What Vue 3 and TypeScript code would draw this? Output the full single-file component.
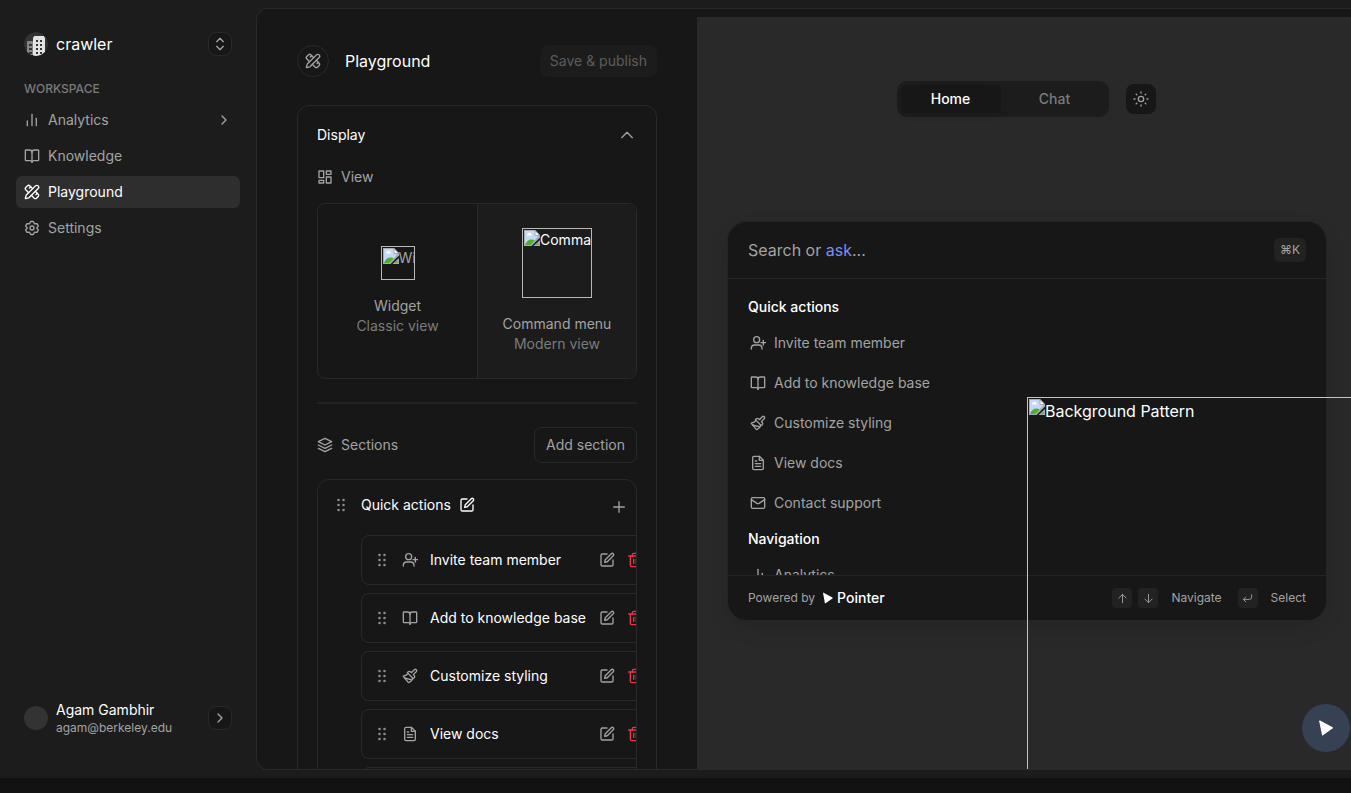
<script setup lang="ts">
import { h, ref } from 'vue'

const glyphs: Record<string, string[]> = {
  bars: ['M5 20.500v-7', 'M12 20.500V3.500', 'M18.500 20.500V9.500'],
  book: ['M12 6.5v15', 'M12 6.5C12 4.6 10.6 3 8.500 3H3a1 1 0 0 0-1 1v14a1 1 0 0 0 1 1h6.500c1.400 0 2.500 1 2.500 2.500 0-1.500 1.100-2.500 2.500-2.500H21a1 1 0 0 0 1-1V4a1 1 0 0 0-1-1h-5.500C13.400 3 12 4.600 12 6.500z'],
  design: [
    'M13 7 8.700 2.700a2.410 2.410 0 0 0-3.400 0L2.700 5.300a2.410 2.410 0 0 0 0 3.400L7 13',
    'm8 6 2-2', 'm18 16 2-2',
    'm17 11 4.300 4.300c.94.94.94 2.460 0 3.400l-2.600 2.600c-.94.94-2.460.94-3.400 0L11 17',
    'M21.200 6.800a2.800 2.800 0 0 0-4-4L3.800 16.200a2 2 0 0 0-.5.8L2 21.400a.5.5 0 0 0 .6.6L7 20.700a2 2 0 0 0 .8-.5z',
  ],
  gear: [
    'M10 2.200h4l1.650 3.480 3.840-.310 2 3.460L19.300 12l2.190 3.170-2 3.460-3.840-.310L14 21.800h-4l-1.650-3.480-3.840.310-2-3.460L4.700 12 2.510 8.830l2-3.460 3.840.310z',
    'M12 9a3 3 0 1 0 0 6 3 3 0 0 0 0-6z',
  ],
  right: ['m9 6 6 6-6 6'],
  up: ['m4 16 8-8 8 8'],
  sort: ['m7 8.500 5-5 5 5', 'm7 15.500 5 5 5-5'],
  grid: ['M3 3h7v10H3z', 'M14 3h7v5h-7z', 'M14 12h7v9h-7z', 'M3 17h7v4H3z'],
  layers: ['m12 2 10 5-10 5L2 7z', 'm2 12 10 5 10-5', 'm2 17 10 5 10-5'],
  edit: ['M12 3H5a2 2 0 0 0-2 2v14a2 2 0 0 0 2 2h14a2 2 0 0 0 2-2v-7', 'M18.400 2.600a2.100 2.100 0 0 1 3 3l-9 9L8.500 15.500l.9-3.900z'],
  plus: ['M12 4v16', 'M4 12h16'],
  userPlus: ['M10 2.500a4.500 4.500 0 1 0 0 9 4.500 4.500 0 0 0 0-9z', 'M2 21v-1a5 5 0 0 1 5-5h6a5 5 0 0 1 5 5v1', 'M20 8v7', 'M16.500 11.500h7'],
  brush: [
    'm14.600 17.900-10.700-2.900',
    'M18.400 2.600a2.120 2.120 0 1 1 3 3l-4 4a.5.5 0 0 0 0 .7l.9 1a2.400 2.400 0 0 1 0 3.400l-.9.900a.5.5 0 0 1-.7 0L8.400 7.300a.5.5 0 0 1 0-.7l.9-.900a2.400 2.400 0 0 1 3.400 0l1 .900a.5.5 0 0 0 .7 0z',
    'M9 8c-1.800 2.700-4 3.500-6.600 3.900a.5.5 0 0 0-.3.900l7.300 8.800a1 1 0 0 0 1.200.2C12.700 20.400 16 16.800 16 15',
  ],
  doc: ['M14 2H6a2 2 0 0 0-2 2v16a2 2 0 0 0 2 2h12a2 2 0 0 0 2-2V8z', 'M14 2v6h6', 'M8 9h2', 'M8 13h8', 'M8 17h8'],
  mail: ['M4 4h16a2 2 0 0 1 2 2v12a2 2 0 0 1-2 2H4a2 2 0 0 1-2-2V6c0-1.100.9-2 2-2z', 'm2 7 8.500 5.500a3 3 0 0 0 3 0L22 7'],
  trash: ['M2.500 6h19', 'M5 6v14a2 2 0 0 0 2 2h10a2 2 0 0 0 2-2V6', 'M8 6V4a2 2 0 0 1 2-2h4a2 2 0 0 1 2 2v2', 'M10 11v6', 'M14 11v6'],
  sun: ['M12 8a4 4 0 1 0 0 8 4 4 0 0 0 0-8z', 'M12 1.500v1.500', 'M12 21v1.500', 'm4.700 4.700 1 1', 'm18.300 18.300 1 1', 'M1.500 12H3', 'M21 12h1.500', 'm4.700 19.300 1-1', 'm18.300 5.700 1-1'],
  arrowUp: ['M12 21V3', 'm4 11 8-8 8 8'],
  arrowDown: ['M12 3v18', 'm4 13 8 8 8-8'],
  enter: ['M21 4v5a5 5 0 0 1-5 5H3', 'm8 9-5 5 5 5'],
}

const Icon = (props: { name: string }) =>
  h('svg', { class: 'icon', viewBox: '0 0 24 24', 'aria-hidden': 'true' }, glyphs[props.name].map((d) => h('path', { d })))
Icon.props = ['name']

const Grip = () =>
  h('svg', { class: 'grip', viewBox: '0 0 8 14', 'aria-hidden': 'true' },
    [2, 7, 12].flatMap((cy) => [1.5, 6.5].map((cx) => h('circle', { cx, cy, r: 1.3 }))))

const Missing = () =>
  h('svg', { class: 'missing', viewBox: '0 0 16 16', 'aria-hidden': 'true' }, [
    h('path', { d: 'M0 0h11l5 5v2.500L7.500 16H0z', fill: '#a9adb3' }),
    h('path', { d: 'M1 1h10v5h3.500L6.500 15H1z', fill: '#c5d8f8' }),
    h('path', { d: 'M3 5.500a1.200 1.200 0 0 1 .8-1.700 1.900 1.900 0 0 1 3.400.200A1.200 1.200 0 0 1 8 5.500z', fill: '#fff' }),
    h('path', { d: 'M1 15c1-3.500 3.500-5.500 6.500-5.500 1.300 0 2.300.4 3.200 1.100L6.500 15z', fill: '#4fae30' }),
    h('path', { d: 'M11 .500v5h4.700z', fill: '#fff', stroke: '#999', 'stroke-width': 0.8 }),
    h('path', { d: 'M16 10v6H9.500z', fill: '#a9adb3' }),
    h('path', { d: 'M14.500 12.500V15h-3z', fill: '#5faf43' }),
  ])

const nav = [
  { icon: 'bars', label: 'Analytics', more: true },
  { icon: 'book', label: 'Knowledge' },
  { icon: 'design', label: 'Playground', active: true },
  { icon: 'gear', label: 'Settings' },
]
const actions = [
  { icon: 'userPlus', label: 'Invite team member' },
  { icon: 'book', label: 'Add to knowledge base' },
  { icon: 'brush', label: 'Customize styling' },
  { icon: 'doc', label: 'View docs' },
  { icon: 'mail', label: 'Contact support' },
]
const view = ref('command')
const tab = ref('Home')
</script>

<template>
  <div class="app">
    <aside class="sidebar">
      <div class="account">
        <svg class="avatar" viewBox="0 0 24 24" aria-hidden="true">
          <defs><clipPath id="disc"><circle cx="12" cy="12" r="12" /></clipPath></defs>
          <g clip-path="url(#disc)">
            <path fill="#333" d="M0 0h24v24H0z" />
            <path fill="#858585" d="M3 10q0-1 1-1h5v14H3z" />
            <path fill="#e3e3e3" d="M9 6q0-1 1-1V4h10v1q1 0 1 1v18H9z" />
            <path fill="#333" d="M5 12h3v2H5zM5 16h3v2H5zM5 20h3v2H5zM12 8h2v2h-2zM16 8h2v2h-2zM12 12h2v2h-2zM16 12h2v2h-2zM12 16h2v2h-2zM16 16h2v2h-2zM12 20h2v2h-2zM16 20h2v2h-2z" />
          </g>
        </svg>
        <span class="org">crawler</span>
        <button class="mini" aria-label="Switch workspace"><Icon name="sort" /></button>
      </div>
      <div class="caption">WORKSPACE</div>
      <nav class="nav">
        <a v-for="n in nav" :key="n.label" href="#" :class="{ active: n.active }">
          <Icon :name="n.icon" /><span>{{ n.label }}</span>
          <Icon v-if="n.more" name="right" class="more" />
        </a>
      </nav>
      <div class="account user">
        <span class="disc"></span>
        <div class="who"><div class="name">Agam Gambhir</div><div class="email">agam@berkeley.edu</div></div>
        <button class="mini" aria-label="Open account"><Icon name="right" /></button>
      </div>
    </aside>

    <main class="main">
      <section class="editor">
        <header class="head">
          <span class="badge"><Icon name="design" /></span>
          <h1>Playground</h1>
          <button class="save" disabled>Save &amp; publish</button>
        </header>
        <div class="card">
          <button class="fold"><span>Display</span><Icon name="up" /></button>
          <div class="label"><Icon name="grid" /><span>View</span></div>
          <div class="views">
            <button :aria-pressed="view === 'widget'" @click="view = 'widget'">
              <span class="thumb small"><Missing /><span>Widget</span></span>
              <span>Widget</span><span class="soft">Classic view</span>
            </button>
            <button :aria-pressed="view === 'command'" @click="view = 'command'">
              <span class="thumb large"><Missing /><span>Command menu</span></span>
              <span>Command menu</span><span class="soft">Modern view</span>
            </button>
          </div>
          <hr />
          <div class="label sections">
            <Icon name="layers" /><span>Sections</span>
            <button class="add">Add section</button>
          </div>
          <div class="group">
            <div class="group-head">
              <Grip /><span>Quick actions</span>
              <button class="plain" aria-label="Rename section"><Icon name="edit" /></button>
              <button class="plain plus" aria-label="Add action"><Icon name="plus" /></button>
            </div>
            <div class="rows">
              <div v-for="a in actions" :key="a.label" class="row">
                <Grip /><Icon :name="a.icon" /><span>{{ a.label }}</span>
                <button class="plain edit" :aria-label="'Edit ' + a.label"><Icon name="edit" /></button>
                <button class="plain danger" :aria-label="'Delete ' + a.label"><Icon name="trash" /></button>
              </div>
            </div>
          </div>
        </div>
      </section>

      <section class="preview">
        <div class="bar">
          <div class="tabs">
            <button v-for="t in ['Home', 'Chat']" :key="t" :class="{ on: tab === t }" @click="tab = t">{{ t }}</button>
          </div>
          <button class="theme" aria-label="Light theme"><Icon name="sun" /></button>
        </div>
        <div class="menu">
          <button class="search"><span>Search or <b>ask</b>...</span><kbd class="hot">⌘K</kbd></button>
          <div class="list">
            <h2>Quick actions</h2>
            <a v-for="a in actions" :key="a.label" href="#"><Icon :name="a.icon" />{{ a.label }}</a>
            <h2>Navigation</h2>
            <a href="#"><Icon name="bars" />Analytics</a>
          </div>
          <footer>
            <span>Powered by</span>
            <svg class="pointer" viewBox="0 0 10 12" aria-hidden="true"><path d="M.6.700 9.400 5.500q.7.400 0 .9L2.600 11.200q-.7.400-.8-.4L.1 1.200Q0 .300.600.700z" /></svg>
            <strong>Pointer</strong>
            <kbd class="first"><Icon name="arrowUp" /></kbd><kbd><Icon name="arrowDown" /></kbd>
            <span class="hint">Navigate</span>
            <kbd class="enter"><Icon name="enter" /></kbd><span class="hint">Select</span>
          </footer>
        </div>
        <div class="pattern"><Missing /><span>Background Pattern</span></div>
      </section>
    </main>
    <button class="fab" aria-label="Open Pointer">
      <svg viewBox="0 0 16 16" aria-hidden="true"><path d="M2 .500 14.700 7.300q.6.500 0 1L5 15.300q-.8.400-1-.4L1.200 1.200Q1.200.200 2 .500z" /></svg>
    </button>
  </div>
</template>

<style>
body { margin: 0; background: #121212; overflow: hidden; }
</style>

<style scoped>
* { box-sizing: border-box; }
.app {
  position: relative; display: flex; height: calc(100vh - 15px); overflow: hidden;
  background: #1c1c1c; color: #fff;
  font: 400 14px/20px Inter, "Noto Sans", "DejaVu Sans", sans-serif;
}
button { font: inherit; color: inherit; background: none; border: 0; padding: 0; margin: 0; cursor: pointer; }
a { color: inherit; text-decoration: none; }
.app :deep(.icon) { width: 16px; height: 16px; flex: none; display: block; fill: none; stroke: currentColor; stroke-width: 2; stroke-linecap: round; stroke-linejoin: round; }
.app :deep(.grip) { width: 8px; height: 14px; flex: none; fill: #8c8c8c; }
.app :deep(.missing) { width: 16px; height: 16px; flex: none; display: block; }

.sidebar { width: 256px; flex: none; display: flex; flex-direction: column; padding: 32px 16px 42px; color: #a3a3a3; }
.account { display: flex; align-items: center; gap: 8px; padding: 0 8px; }
.avatar, .disc { width: 24px; height: 24px; flex: none; border-radius: 50%; }
.disc { background: #333; }
.org { font-size: 16px; line-height: 24px; color: #fff; }
.mini { width: 24px; height: 24px; margin-left: auto; display: grid; place-items: center; border: 1px solid #292929; border-radius: 8px; background: #171717; color: #a3a3a3; }
.caption { padding: 0 8px; margin: 25px 0 7px; font-size: 12px; line-height: 16px; font-weight: 500; color: #7b7b7b; }
.nav { display: flex; flex-direction: column; gap: 4px; }
.nav a { display: flex; align-items: center; gap: 8px; height: 32px; padding: 0 8px; border-radius: 6px; }
.nav a.active { background: #2e2e2e; color: #fff; }
.nav .more { margin-left: auto; }
.user { margin-top: auto; }
.name { color: #fff; line-height: 20px; }
.email { font-size: 12px; line-height: 16px; }

.main { flex: 1; min-width: 0; display: flex; margin: 8px 0; overflow: hidden; border: 1px solid #292929; border-right: 0; border-radius: 12px 0 0 12px; background: #171717; }
.editor { width: 440px; flex: none; padding: 36px 40px 0; }
.head { display: flex; align-items: center; margin-bottom: 28px; }
.badge { width: 32px; height: 32px; margin-right: 16px; display: grid; place-items: center; border: 1px solid #292929; border-radius: 50%; color: #a3a3a3; }
h1 { margin: 0; font-size: 16px; line-height: 24px; font-weight: 400; }
.save { height: 32px; margin-left: auto; padding: 0 10px; border-radius: 8px; background: #1c1c1c; color: #5c5c5c; }
.card { padding: 19px 19px 0; border: 1px solid #292929; border-radius: 12px; }
.fold { display: flex; width: 100%; align-items: center; justify-content: space-between; padding-right: 2px; }
.fold :deep(.icon), .label, .label :deep(.icon), .plus { color: #a3a3a3; }
.label { display: flex; align-items: center; gap: 8px; margin: 22px 0 16px; }
.views { display: grid; grid-template-columns: 1fr 1fr; height: 176px; overflow: hidden; border: 1px solid #292929; border-radius: 8px; }
.views button { display: flex; flex-direction: column; align-items: center; justify-content: center; color: #a3a3a3; }
.views button + button { border-left: 1px solid #292929; }
.views button[aria-pressed="true"] { background: #1c1c1c; }
.soft { color: #7b7b7b; }
.thumb { display: flex; align-items: flex-start; overflow: hidden; margin-bottom: 16px; padding: 1px; border: 1px solid #b8b8b8; white-space: nowrap; }
.small { width: 34px; height: 34px; }
.large { width: 70px; height: 70px; color: #fff; }
hr { height: 2px; margin: 23px 0; border: 0; background: #222; }
.sections { margin: 0 0 16px; }
.add { height: 36px; margin-left: auto; padding: 0 11px; border: 1px solid #292929; border-radius: 8px; }
.group { overflow: hidden; padding: 15px 0 16px 19px; border: 1px solid #292929; border-radius: 12px; }
.group-head { display: flex; align-items: center; margin-bottom: 20px; }
.group-head :deep(.grip) { margin-right: 16px; }
.plain { display: block; }
.group-head .plain { margin-left: 8px; }
.group-head .plus { margin-left: auto; margin-right: 9px; padding-top: 4px; }
.rows { display: flex; flex-direction: column; gap: 8px; width: 300px; margin-left: 24px; }
.row { display: flex; align-items: center; height: 50px; padding: 0 17px 0 16px; border: 1px solid #292929; border-radius: 8px; }
.row > :deep(.icon) { margin: 0 12px 0 16px; color: #a3a3a3; }
.edit { margin-left: auto; color: #a3a3a3; }
.danger { margin-left: 12px; color: #e93544; }

.preview { position: relative; flex: 1; min-width: 0; margin: 8px -6px 0 0; padding: 64px 30px 0; background: #292929; }
.bar { display: flex; align-items: center; justify-content: center; gap: 17px; padding-right: 2px; margin-bottom: 104px; }
.tabs { display: grid; grid-template-columns: 1fr 1fr; gap: 4px; width: 212px; padding: 4px; border-radius: 10px; background: #1c1c1c; color: #7b7b7b; font-weight: 500; }
.tabs button { height: 28px; border-radius: 6px; }
.tabs .on { background: #171717; color: #fff; box-shadow: 0 4px 8px #0000000a; }
.theme { width: 30px; height: 30px; display: grid; place-items: center; border-radius: 8px; background: #171717; color: #a3a3a3; }
.menu { overflow: hidden; border: 1px solid #242424; border-radius: 20px; background: #171717; box-shadow: 0 8px 20px #00000018; color: #a3a3a3; }
.search { display: flex; align-items: center; justify-content: space-between; width: 100%; height: 57px; padding: 0 20px; border-bottom: 1px solid #242424; font-size: 16px; }
.search b { font-weight: 400; color: #7d8bfa; }
kbd { display: grid; place-items: center; width: 20px; height: 20px; border-radius: 4px; background: #222; font: 400 12px/16px Inter, "DejaVu Sans", sans-serif; }
.app kbd :deep(.icon) { width: 11px; height: 11px; }
.hot { width: 32px; height: 24px; border-radius: 6px; }
.list { height: 296px; overflow: hidden; padding: 12px 20px 0; }
h2 { margin: 0; padding: 6px 0; font-size: 14px; line-height: 20px; font-weight: 500; color: #fff; }
.list a { display: flex; align-items: center; gap: 8px; height: 40px; padding-left: 2px; }
footer { display: flex; align-items: center; height: 45px; padding: 0 20px; border-top: 1px solid #242424; font-size: 12px; }
.pointer { width: 10px; height: 12px; margin: 0 4px 0 8px; fill: #fff; }
strong { font-size: 14px; font-weight: 500; color: #fff; }
kbd.first { margin: 0 6px 0 auto; }
.hint { margin-left: 13px; }
kbd.enter { margin-left: 16px; }
.pattern { position: absolute; inset: 380px 0 -2px 50%; display: flex; align-items: flex-start; padding: 1px; border: 1px solid #c4c4c4; font-size: 16px; line-height: 24px; }
.fab { position: absolute; right: 1px; bottom: 26px; width: 48px; height: 48px; display: grid; place-items: center; border-radius: 50%; background: #364153; }
.fab svg { width: 16px; height: 16px; fill: #fff; }
</style>
